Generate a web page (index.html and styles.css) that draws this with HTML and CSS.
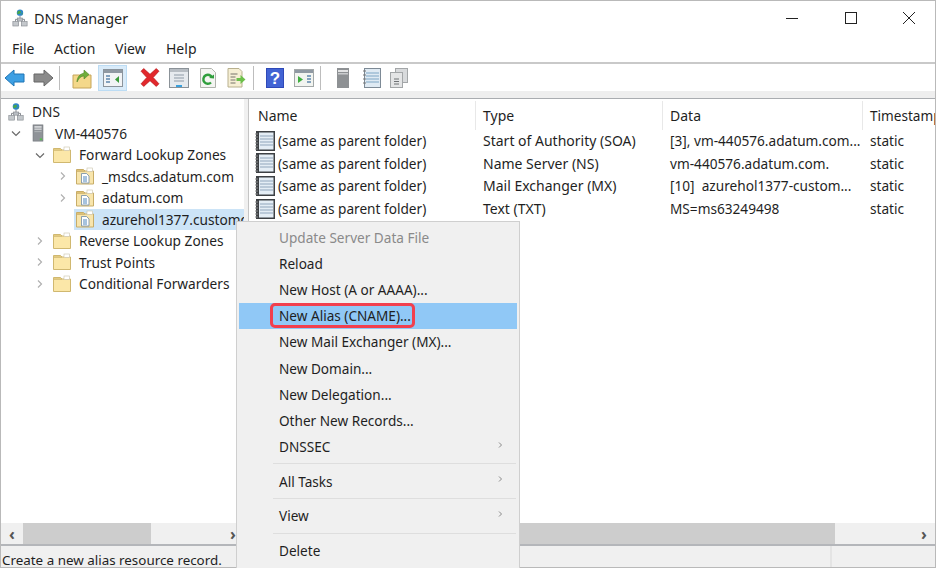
FILE: index.html
```html
<!DOCTYPE html>
<html lang="en">
<head>
	<meta charset="UTF-8">
	<title>DNS Manager</title>
	<link rel="stylesheet" href="styles.css">
</head>
<body>
	<svg class="defs" width="0" height="0">
		<symbol id="i-dns" viewBox="0 0 18 20">
			<path d="M9 7v4M4 14v-2.500h10V14" fill="none" stroke="#7a7f86"/>
			<circle cx="9" cy="4" r="3.600" fill="#2f86c9"/>
			<path d="M6.500 2.500c1.500-1 3-.8 3.500.2s-.5 2-1.500 2.500-2 .5-2.800 0zM10 6l1.500-1.500.8 1z" fill="#49a84a"/>
			<rect x="6" y="10" width="6" height="3.500" fill="#b9bec4" stroke="#85898f" stroke-width=".7"/>
			<rect x="1" y="14" width="6.500" height="5" fill="#c4c8cc" stroke="#85898f" stroke-width=".7"/>
			<rect x="10.500" y="14" width="6.500" height="5" fill="#c4c8cc" stroke="#85898f" stroke-width=".7"/>
		</symbol>
		<symbol id="i-server" viewBox="0 0 18 20">
			<rect x="3.500" y="1" width="11" height="18" fill="#8f9398" stroke="#6f7378" stroke-width=".7"/>
			<rect x="5" y="2.500" width="8" height="1.500" fill="#e8e9ea"/>
			<rect x="5" y="5" width="8" height="1.500" fill="#d4d6d8"/>
			<rect x="5" y="8" width="8" height="1" fill="#b4b7ba"/>
			<rect x="11" y="16" width="2.500" height="2" fill="#54c04c"/>
		</symbol>
		<symbol id="i-folder" viewBox="0 0 18 18">
			<path d="M.5 4h17v12.500H.5z" fill="#fbe7a8" stroke="#d0b870"/>
			<path d="M.5 4V2.500h7L9 4z" fill="#f5dc90" stroke="#d0b870"/>
			<rect x="11" y="1" width="5.500" height="3.500" fill="#fff" stroke="#c9c2a8" stroke-width=".6"/>
		</symbol>
		<symbol id="i-zone" viewBox="0 0 18 18">
			<path d="M.5 4h17v13H.5z" fill="#f8e5ac" stroke="#c8ad68"/>
			<path d="M.5 4V2.500h7L9 4z" fill="#f3d683" stroke="#c8ad68"/>
			<rect x="11" y="1" width="5.500" height="3.500" fill="#fff" stroke="#c9c2a8" stroke-width=".6"/>
			<path d="M5.500 6.500h5l2.500 2.500v7H5.500z" fill="#fff" stroke="#6f8aa5" stroke-width=".8"/>
			<path d="M7 10h4M7 12h4M7 14h4" stroke="#3b78b5" stroke-width=".9"/>
		</symbol>
		<symbol id="i-record" viewBox="0 0 20 20">
			<rect x="1" y="0" width="19" height="20" fill="#3d4044"/>
			<rect x="4" y="1.500" width="14.500" height="17" fill="#e4edf5"/>
			<path d="M5 5h13M5 8h13M5 11h13M5 14h13" stroke="#8fa6bb" stroke-width="1.200"/>
			<path d="M0 3h3M0 6h3M0 9h3M0 12h3M0 15h3M0 18h3" stroke="#888" stroke-width="1"/>
		</symbol>
		<symbol id="i-more" viewBox="0 0 6 8">
			<path d="M2 1.500 4.500 4 2 6.500" fill="none" stroke="#8a8a8a"/>
		</symbol>
		<symbol id="i-open" viewBox="0 0 16 16">
			<path d="M7 4.500l3.500 3.500L7 11.500" fill="none" stroke="#b0b0b0" stroke-width="1.200"/>
		</symbol>
		<symbol id="i-close" viewBox="0 0 16 16">
			<path d="M5 6.500l4 4 4-4" fill="none" stroke="#6a6a6a" stroke-width="1.200"/>
		</symbol>
	</svg>

	<div class="window">
		<div class="titlebar">
			<svg class="title-icon"><use href="#i-dns"/></svg>
			<span class="title-text">DNS Manager</span>
			<div class="win-btns">
				<svg class="win-btn" viewBox="0 0 12 12"><path d="M0 6.500h12" stroke="#222" fill="none"/></svg>
				<svg class="win-btn" viewBox="0 0 12 12"><rect x=".5" y=".5" width="11" height="11" stroke="#222" fill="none"/></svg>
				<svg class="win-btn" viewBox="0 0 12 12"><path d="M0 0l12 12M12 0 0 12" stroke="#222" fill="none"/></svg>
			</div>
		</div>

		<div class="menubar">
			<span class="menu-file">File</span>
			<span class="menu-action">Action</span>
			<span class="menu-view">View</span>
			<span>Help</span>
		</div>

		<div class="toolbar">
			<div class="tools first">
				<span class="tool"><svg width="21" height="18" viewBox="0 0 21 18"><path d="M1 9 10 1v4h10v8H10v4z" fill="#3d9fe3" stroke="#1f74b5"/></svg></span>
				<span class="tool"><svg width="21" height="18" viewBox="0 0 21 18"><path d="M20 9 11 1v4H1v8h10v4z" fill="#8a8a8a" stroke="#666"/></svg></span>
			</div>
			<span class="tool-sep sep-a"></span>
			<div class="tools">
				<span class="tool tool-up"><svg width="20" height="22" viewBox="0 0 20 22"><path d="M1 8h18v13H1z" fill="#f4d88a" stroke="#c6a55a"/><path d="M5 15c0-5 3-8 7-9V3l5 4.500-5 4.500V9c-3 0-5 2-7 6z" fill="#6fae3a" stroke="#4d8526" stroke-width=".6"/></svg></span>
				<span class="tool active"><svg width="20" height="18" viewBox="0 0 20 18"><rect x=".5" y=".5" width="19" height="17" fill="#f2f4f6" stroke="#8b949c"/><rect x="1" y="1" width="18" height="3" fill="#8f99a3"/><path d="M3 7h4M3 10h4M3 13h4" stroke="#5f87ad" stroke-width="1.500"/><path d="M16 7v7l-4-3.500z" fill="#3c9c3c"/></svg></span>
			</div>
			<div class="tools second">
				<span class="tool"><svg width="22" height="21" viewBox="0 0 20 20"><path d="M1.500 4 4 1.500l6 5.500 6-5.500L18.500 4 13 10l5.500 6-2.500 2.500-6-5.500-6 5.500L1.500 16 7 10z" fill="#e2282c" stroke="#b81c20" stroke-width=".7"/></svg></span>
				<span class="tool"><svg width="20" height="20" viewBox="0 0 20 20"><rect x=".5" y=".5" width="19" height="19" fill="#e6eaee" stroke="#8b9298"/><rect x="1" y="1" width="18" height="3" fill="#b7bdc3"/><path d="M5 7h10M5 10h10M5 13h10" stroke="#8e9aa6"/><rect x="7" y="17" width="6" height="2" fill="#3aa0dc"/></svg></span>
				<span class="tool"><svg width="18" height="20" viewBox="0 0 18 20"><path d="M1.500.5h11l4 4v15h-15z" fill="#f4f5f2" stroke="#b0b3ad"/><path d="M13 9.500a4.500 4.500 0 1 0-1 5" fill="none" stroke="#2f9e3c" stroke-width="2.400"/><path d="M10 10l5 .5 0-4z" fill="#2f9e3c"/></svg></span>
				<span class="tool"><svg width="21" height="20" viewBox="0 0 20 20"><path d="M1.500.5h11l3 3v15.500h-14z" fill="#f6efd4" stroke="#b8b08e"/><path d="M4 6h7M4 9h5M4 12h5M4 15h5" stroke="#77736a"/><path d="M10 10h4V7l5 4.500-5 4.500v-3h-4z" fill="#6cc04a"/></svg></span>
			</div>
			<span class="tool-sep sep-b"></span>
			<div class="tools">
				<span class="tool"><svg width="18" height="20" viewBox="0 0 18 20"><rect width="18" height="20" fill="#2f49b8"/><rect x="1" y="1" width="16" height="18" fill="#4263d4"/><text x="9" y="16" class="help-mark">?</text></svg></span>
				<span class="tool"><svg width="20" height="18" viewBox="0 0 20 18"><rect x=".5" y=".5" width="19" height="17" fill="#f2f4f0" stroke="#a3a8a8"/><rect x="1" y="1" width="18" height="3" fill="#8f99a3"/><path d="M4 7v7l5-3.500z" fill="#3fae3f"/><path d="M13 7h4M13 10h4M13 13h4" stroke="#5f87ad" stroke-width="1.500"/></svg></span>
			</div>
			<span class="tool-sep sep-c"></span>
			<div class="tools">
				<span class="tool"><svg width="12" height="20" viewBox="0 0 12 20"><rect width="12" height="20" fill="#8e9194"/><rect x="1" y="2" width="10" height="2" fill="#e2e3e4"/><rect x="1" y="5" width="10" height="1.500" fill="#c9cbcd"/></svg></span>
				<span class="tool"><svg width="18" height="20" viewBox="0 0 18 20"><rect x="1.500" y=".5" width="16" height="19" fill="#dfeaf3" stroke="#7d8a96"/><path d="M3 5h13M3 8h13M3 11h13M3 14h13" stroke="#7fa6c6" stroke-width="1.200"/><path d="M0 3h3M0 7h3M0 11h3M0 15h3" stroke="#777"/></svg></span>
				<span class="tool tool-copy"><svg width="18" height="20" viewBox="0 0 18 20"><rect x="5.500" y=".5" width="12" height="14" fill="#d8dadc" stroke="#a3a6a8"/><rect x=".5" y="4.500" width="12" height="15" fill="#e4e5e6" stroke="#a3a6a8"/><path d="M4 11h5M4 13.500h5M4 16h5" stroke="#6f7275"/></svg></span>
			</div>
		</div>
		<div class="strip"></div>

		<div class="panes">
			<div class="tree-pane">
				<div class="tree">
					<div class="node">
						<div class="label"><svg class="node-icon"><use href="#i-dns"/></svg><span>DNS</span></div>
					</div>
					<div class="node lvl1">
						<svg class="chev"><use href="#i-close"/></svg>
						<div class="label"><svg class="node-icon"><use href="#i-server"/></svg><span>VM-440576</span></div>
					</div>
					<div class="node lvl2">
						<svg class="chev"><use href="#i-close"/></svg>
						<div class="label"><svg class="node-icon"><use href="#i-folder"/></svg><span>Forward Lookup Zones</span></div>
					</div>
					<div class="node lvl3">
						<svg class="chev"><use href="#i-open"/></svg>
						<div class="label"><svg class="node-icon"><use href="#i-zone"/></svg><span>_msdcs.adatum.com</span></div>
					</div>
					<div class="node lvl3">
						<svg class="chev"><use href="#i-open"/></svg>
						<div class="label"><svg class="node-icon"><use href="#i-zone"/></svg><span>adatum.com</span></div>
					</div>
					<div class="node lvl3">
						<span class="chev"></span>
						<div class="label selected"><svg class="node-icon"><use href="#i-zone"/></svg><span>azurehol1377.customdomain.com</span></div>
					</div>
					<div class="node lvl2">
						<svg class="chev"><use href="#i-open"/></svg>
						<div class="label"><svg class="node-icon"><use href="#i-folder"/></svg><span>Reverse Lookup Zones</span></div>
					</div>
					<div class="node lvl2">
						<svg class="chev"><use href="#i-open"/></svg>
						<div class="label"><svg class="node-icon"><use href="#i-folder"/></svg><span>Trust Points</span></div>
					</div>
					<div class="node lvl2">
						<svg class="chev"><use href="#i-open"/></svg>
						<div class="label"><svg class="node-icon"><use href="#i-folder"/></svg><span>Conditional Forwarders</span></div>
					</div>
				</div>
				<div class="hscroll">
					<span class="arrow">&lsaquo;</span>
					<span class="thumb thumb-tree"></span>
					<span class="arrow">&rsaquo;</span>
				</div>
			</div>

			<div class="list-pane">
				<div class="list">
					<div class="list-row list-head">
						<span>Name</span>
						<span>Type</span>
						<span>Data</span>
						<span>Timestamp</span>
					</div>
					<div class="list-row">
						<span class="rec-name"><svg class="rec-icon"><use href="#i-record"/></svg>(same as parent folder)</span>
						<span>Start of Authority (SOA)</span>
						<span>[3], vm-440576.adatum.com...</span>
						<span>static</span>
					</div>
					<div class="list-row">
						<span class="rec-name"><svg class="rec-icon"><use href="#i-record"/></svg>(same as parent folder)</span>
						<span>Name Server (NS)</span>
						<span>vm-440576.adatum.com.</span>
						<span>static</span>
					</div>
					<div class="list-row">
						<span class="rec-name"><svg class="rec-icon"><use href="#i-record"/></svg>(same as parent folder)</span>
						<span>Mail Exchanger (MX)</span>
						<span>[10]  azurehol1377-custom...</span>
						<span>static</span>
					</div>
					<div class="list-row">
						<span class="rec-name"><svg class="rec-icon"><use href="#i-record"/></svg>(same as parent folder)</span>
						<span>Text (TXT)</span>
						<span>MS=ms63249498</span>
						<span>static</span>
					</div>
				</div>
				<div class="hscroll">
					<span class="arrow">&lsaquo;</span>
					<span class="thumb thumb-list"></span>
					<span class="arrow">&rsaquo;</span>
				</div>
			</div>
		</div>

		<div class="statusbar">
			<span class="status-main">Create a new alias resource record.</span>
			<span class="status-cell"></span>
		</div>

		<div class="context-menu">
			<div class="item disabled">Update Server Data File</div>
			<div class="item">Reload</div>
			<div class="item">New Host (A or AAAA)...</div>
			<div class="item hover"><span class="callout">New Alias (CNAME)...</span></div>
			<div class="item">New Mail Exchanger (MX)...</div>
			<div class="item">New Domain...</div>
			<div class="item">New Delegation...</div>
			<div class="item">Other New Records...</div>
			<div class="item">DNSSEC<svg class="more"><use href="#i-more"/></svg></div>
			<div class="menu-sep"></div>
			<div class="item">All Tasks<svg class="more"><use href="#i-more"/></svg></div>
			<div class="menu-sep"></div>
			<div class="item">View<svg class="more"><use href="#i-more"/></svg></div>
			<div class="menu-sep"></div>
			<div class="item">Delete</div>
		</div>
	</div>
</body>
</html>
```

FILE: styles.css
```css
* {
	margin: 0;
	padding: 0;
	box-sizing: border-box;
}
html, body {
	height: 100%;
	overflow: hidden;
}
body {
	background: #fff;
	color: #1f1f1f;
	font-family: "Noto Sans", "Open Sans", sans-serif;
	font-size: 14px;
}
.defs {
	position: absolute;
}
.window {
	position: relative;
	width: 936px;
	height: 568px;
	display: flex;
	flex-direction: column;
	border: 1px solid #b9b9b9;
	border-bottom: 0;
	overflow: hidden;
}

/* title + menu */
.titlebar {
	height: 34px;
	display: flex;
	align-items: center;
	flex-shrink: 0;
}
.title-icon {
	width: 16px;
	height: 18px;
	margin-left: 11px;
	margin-right: 6px;
}
.title-text {
	font-size: 14.400px;
}
.win-btns {
	margin-left: auto;
	padding-right: 20px;
	display: flex;
	gap: 46.500px;
}
.win-btn {
	width: 12px;
	height: 12px;
}
.menubar {
	height: 29px;
	display: flex;
	align-items: center;
	padding-left: 11px;
	border-bottom: 2px solid #c9c9c9;
	flex-shrink: 0;
}
.menu-file {
	width: 42px;
}
.menu-action {
	width: 61px;
}
.menu-view {
	width: 51px;
}

/* toolbar */
.toolbar {
	height: 27px;
	display: flex;
	align-items: center;
	flex-shrink: 0;
}
.tools {
	display: flex;
}
.tools.first {
	margin-left: -1px;
}
.tools.second {
	margin-left: 8px;
}
.tool {
	width: 29px;
	height: 26px;
	display: flex;
	align-items: center;
	justify-content: center;
}
.tool-up {
	padding-right: 4px;
}
.tool-copy {
	padding-right: 3px;
}
.tool.active {
	background: #d9ebf9;
	border: 1px solid #bcdcf4;
}
.tool-sep {
	width: 1px;
	height: 24px;
	background: #bdbdbd;
}
.sep-a {
	margin: 0 9px 0 1px;
}
.sep-b {
	margin: 0 6px 0 2px;
}
.sep-c {
	margin: 0 7px 0 2px;
}
.help-mark {
	font-family: "Liberation Sans", sans-serif;
	font-size: 17px;
	font-weight: bold;
	fill: #fff;
	text-anchor: middle;
}
.strip {
	height: 8px;
	background: #eeeeee;
	border-bottom: 1px solid #a9acb0;
	flex-shrink: 0;
}

/* panes */
.panes {
	flex: 1;
	min-height: 0;
	display: flex;
	gap: 4px;
	background: #f0f0f0;
}
.tree-pane {
	width: 243px;
	display: flex;
	flex-direction: column;
	background: #fff;
	overflow: hidden;
	flex-shrink: 0;
}
.list-pane {
	flex: 1;
	min-width: 0;
	display: flex;
	flex-direction: column;
	background: #fff;
	border-left: 1px solid #c4c4c4;
	overflow: hidden;
}
.tree {
	flex: 1;
	padding-top: 2px;
	font-size: 13.700px;
}
.node {
	height: 21.500px;
	display: flex;
	align-items: center;
	padding-left: 6px;
	white-space: nowrap;
}
.lvl1 {
	padding-left: 6px;
}
.lvl2 {
	padding-left: 30px;
}
.lvl3 {
	padding-left: 53px;
}
.chev {
	width: 16px;
	height: 16px;
	flex-shrink: 0;
}
.label {
	flex: 1;
	height: 100%;
	display: flex;
	align-items: center;
	padding-left: 2px;
	margin-left: 4px;
	gap: 8px;
}
.node > .label:first-child {
	margin-left: 0;
	padding-left: 0;
	gap: 7px;
}
.selected {
	background: #cce4f7;
}
.node-icon {
	width: 18px;
	height: 18px;
	flex-shrink: 0;
}

/* scrollbars */
.hscroll {
	height: 21px;
	display: flex;
	align-items: center;
	background: #f0f0f0;
	flex-shrink: 0;
}
.arrow {
	width: 22px;
	text-align: center;
	color: #555;
	font-size: 16px;
	font-weight: bold;
	line-height: 18px;
}
.thumb {
	height: 100%;
	background: #cdcdcd;
}
.thumb-tree {
	width: 128px;
	margin-right: auto;
}
.thumb-list {
	flex: 1;
	margin-right: 78px;
}

/* record list */
.list {
	flex: 1;
	font-size: 13.650px;
}
.list-row {
	display: grid;
	grid-template-columns: 226px 187px 200px 1fr;
	height: 22.600px;
	align-items: center;
	white-space: pre;
}
.list-row > span {
	padding-left: 8px;
}
.list-row > span:nth-child(2) {
	font-size: 14px;
}
.list-head {
	height: 30.500px;
	padding-top: 2px;
	font-size: 14px;
}
.list-head > span {
	height: 100%;
	display: flex;
	align-items: center;
	border-left: 1px solid #e8e8e8;
	padding-left: 7px;
}
.list-head > span:first-child {
	border-left: 0;
	padding-left: 9px;
}
.list-head > span:last-child {
	font-size: 13.600px;
}
.list-row > .rec-name {
	padding-left: 6px;
	display: flex;
	align-items: center;
	gap: 3px;
}
.rec-icon {
	width: 20px;
	height: 20px;
	flex-shrink: 0;
}

/* status */
.statusbar {
	height: 24px;
	display: flex;
	background: #f0f0f0;
	border-top: 2px solid #b4b6ba;
	border-bottom: 1px solid #b9b9b9;
	font-size: 13.400px;
	line-height: 14px;
	flex-shrink: 0;
}
.status-main {
	width: 829px;
	padding: 7px 0 0 1px;
	white-space: nowrap;
}
.status-cell {
	height: 100%;
	border-left: 2px solid #e4e4e4;
}

/* context menu, sits over the panes */
.context-menu {
	position: absolute;
	left: 235px;
	top: 220px;
	width: 284px;
	height: 350px;
	padding: 2px 2px 0 2px;
	background: #f0f0f0;
	border: 1px solid #cfcfcf;
	font-size: 13.600px;
}
.item {
	height: 26.200px;
	display: flex;
	align-items: center;
	padding-left: 40px;
	position: relative;
	white-space: nowrap;
}
.disabled {
	color: #8a8a8a;
}
.hover {
	background: #90c8f6;
}
.callout {
	position: relative;
}
.callout::after {
	content: "";
	position: absolute;
	left: -9px;
	right: -4px;
	top: -3px;
	bottom: -3px;
	border: 3.500px solid #f23f4d;
	border-radius: 5px;
}
.more {
	position: absolute;
	left: 258px;
	top: 7px;
	width: 6px;
	height: 8px;
}
.menu-sep {
	height: 1px;
	margin: 3.750px 1px 3.750px 34px;
	background: #dedede;
}
```
